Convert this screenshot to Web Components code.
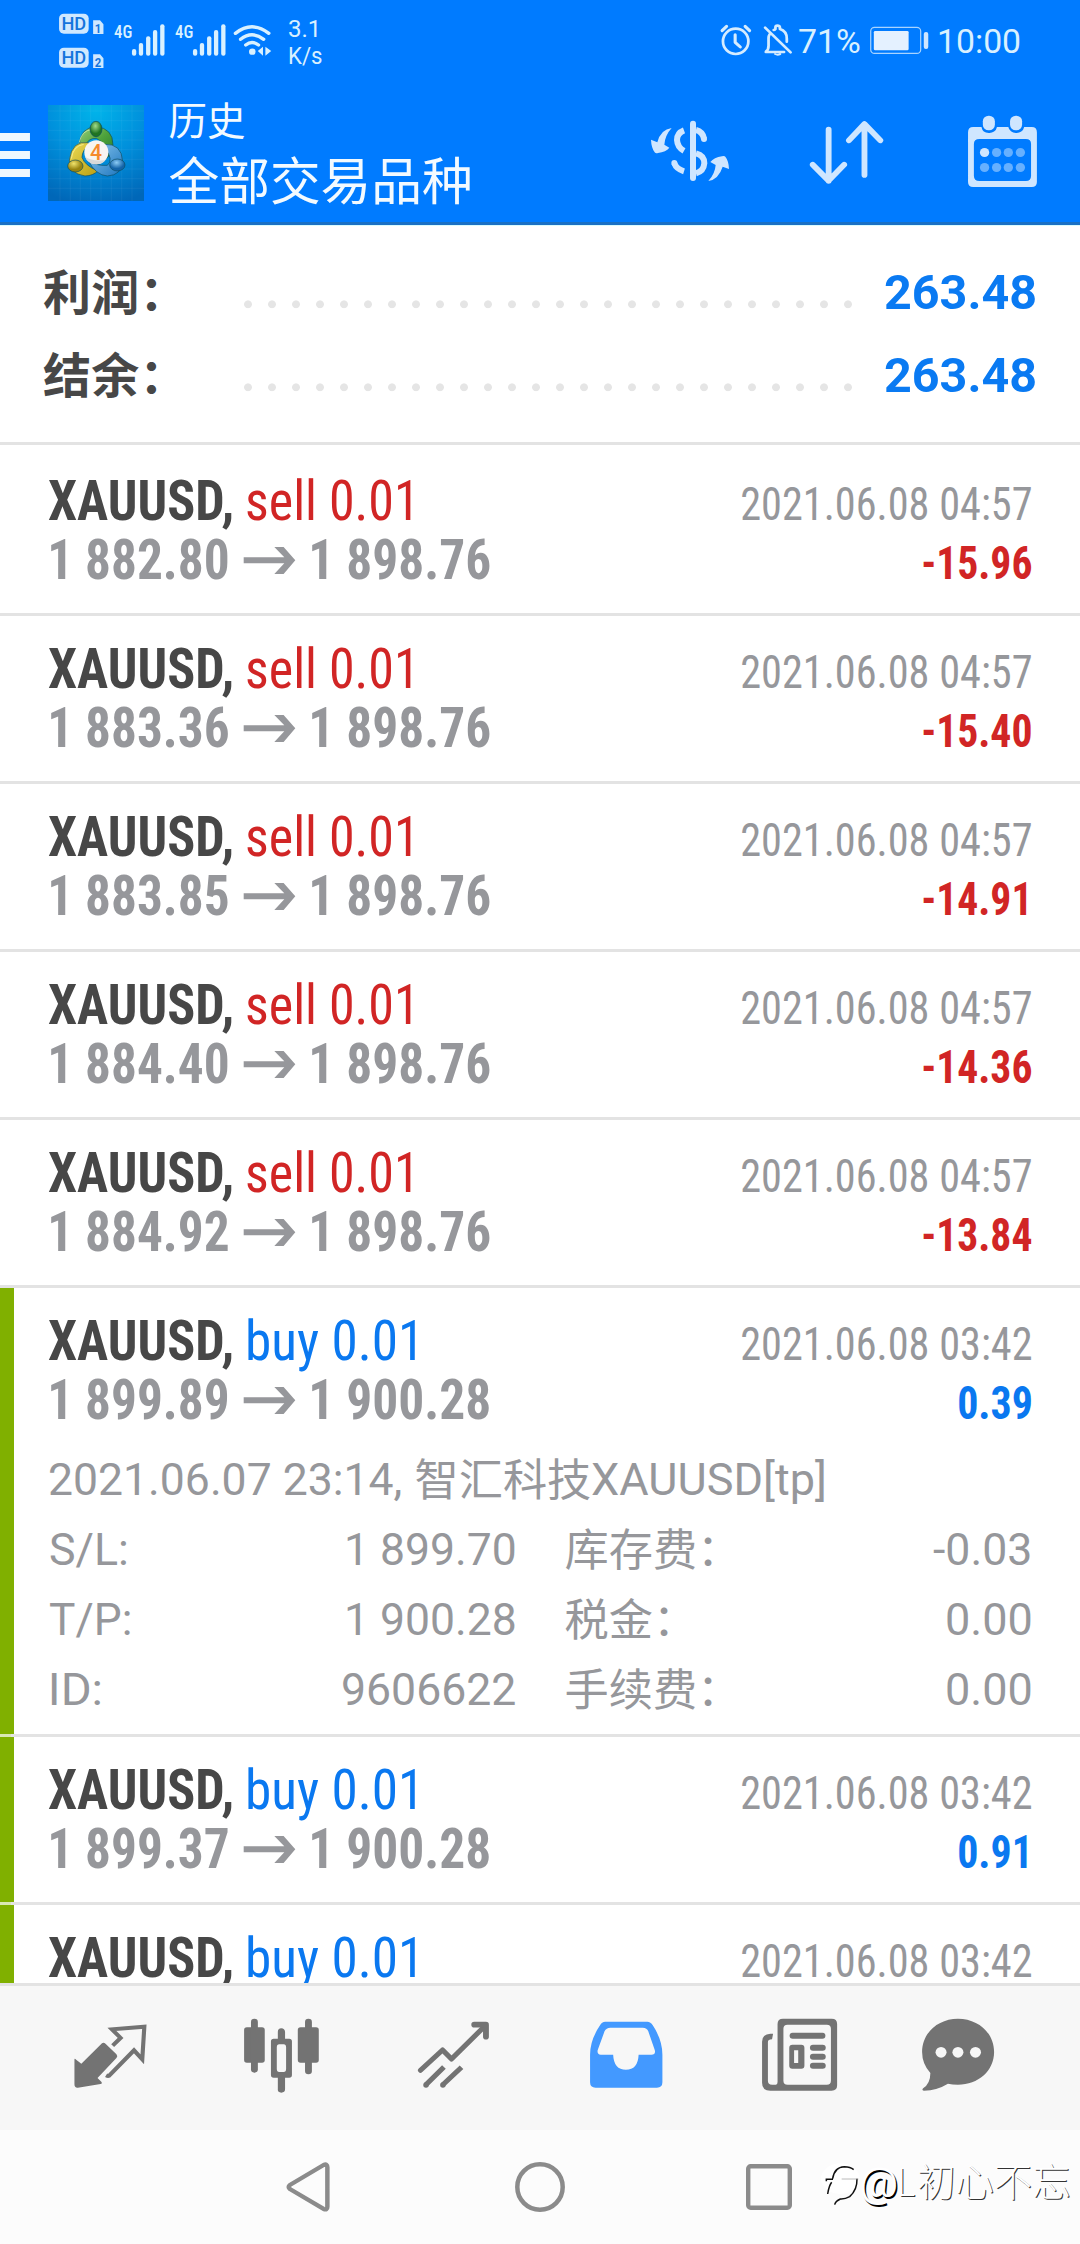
<!DOCTYPE html>
<html lang="zh-CN">
<head>
<meta charset="utf-8">
<title>历史</title>
<style>
html,body{margin:0;padding:0}
body{width:1080px;height:2244px;overflow:hidden;background:#fff;font-family:Roboto,'Noto Sans CJK SC',sans-serif}
</style>
</head>
<body>
<history-app></history-app>
<script>
const define=(name,html,after)=>{
  const t=document.createElement('template');t.innerHTML=html;
  customElements.define(name,class extends HTMLElement{
    connectedCallback(){
      if(this.shadowRoot)return;
      this.attachShadow({mode:'open'}).append(t.content.cloneNode(true));
      after&&after(this,this.shadowRoot);
    }
  });
};

/* Text fitted to a given ink width. "like" names a sample string that defines the scale. */
const ctx=document.createElement('canvas').getContext('2d');
define('fit-text',`<style>:host{display:inline-block;white-space:nowrap}span{display:inline-block;transform-origin:0 50%}</style><span></span>`,(h,r)=>{
  const s=r.querySelector('span'),text=h.getAttribute('text');s.textContent=text;
  const c=getComputedStyle(h);ctx.font=`${c.fontWeight} ${c.fontSize} ${c.fontFamily}`;
  const m=ctx.measureText(h.getAttribute('like')||text);
  const l=-m.actualBoundingBoxLeft,ink=m.actualBoundingBoxRight-l,k=+h.getAttribute('w')/ink;
  const adv=ctx.measureText(text).width,rb=m.width-m.actualBoundingBoxRight;
  h.style.width=(adv-l-rb)*k+'px';
  s.style.transform=`translateX(${-l*k}px) scaleX(${k})`;
});

/* Icons: [viewBox, width, height, markup] */
const bars='<g fill="#d9f1ff">'+[[383,147,20],[403,129,38],[424,109,58],[444,90,77],[465,73,94]].map(([x,y,h])=>`<rect x="${x}" y="${y}" width="12.5" height="${h}" rx="6"/>`).join('')+'</g>';
const ICONS={
 hd:['165 0 145 240',49.9,80,`<g fill="#cfe8ff"><rect x="171" y="41" width="86" height="60" rx="14"/><rect x="171" y="143" width="86" height="60" rx="14"/><path d="M270 61H290L300 73V102H270ZM270 163H290L300 175V204H270Z"/></g><g fill="#1474dd" font-family="Roboto" font-weight="500" font-size="54"><text x="178" y="91" textLength="72" lengthAdjust="spacingAndGlyphs">HD</text><text x="178" y="193" textLength="72" lengthAdjust="spacingAndGlyphs">HD</text><g font-size="38" font-weight="700"><text x="275" y="98" textLength="19" lengthAdjust="spacingAndGlyphs">1</text><text x="275" y="200" textLength="19" lengthAdjust="spacingAndGlyphs">2</text></g></g>`],
 signal:['328 0 155 240',53.4,80,`<text x="331" y="115" font-family="Roboto Condensed" font-weight="500" font-size="57" fill="#d9f1ff" textLength="53" lengthAdjust="spacingAndGlyphs">4G</text>`+bars],
 wifi:['675 0 120 240',41.3,80,`<g fill="none" stroke="#d9f1ff" stroke-width="10" stroke-linecap="round"><path d="M685 100Q733 61 782 100M700 118Q733 91 767 118M715 135Q733 120 752 135"/></g><circle cx="734" cy="155" r="9.500" fill="#d9f1ff"/><path d="M765 140V167L750 153ZM772 140L789 153L772 167Z" fill="#d9f1ff"/>`],
 alarm:['518 0 98 240',33.7,80,`<g fill="none" stroke="#d5ecff" stroke-width="8" stroke-linecap="round" stroke-linejoin="round"><ellipse cx="566.500" cy="124" rx="37" ry="38"/><path d="M565 104V127L580 141" stroke-width="9"/><path d="M527 92L540 79M594 79L607 92" stroke-width="9"/></g>`],
 bell:['642 0 92 240',31.7,80,`<g fill="none" stroke="#d5ecff" stroke-width="8" stroke-linecap="round" stroke-linejoin="round"><path d="M651 83L725 157M653 156H706M654 154Q661 149 661 137V114Q661 108 664 103M676 90Q679 90 681 87V82Q681 77 687 77T694 82V87Q714 93 714 116V125"/><path d="M680 162Q687 166 695 162" stroke-width="6"/></g>`],
 battery:['955 0 175 240',60.3,80,`<rect x="960" y="82" width="145" height="78" rx="11" fill="none" stroke="#a9d4ff" stroke-width="3.500"/><rect x="969" y="93" width="101" height="58" rx="4" fill="#e4f1ff"/><rect x="1114" y="96" width="13" height="51" rx="6" fill="#cfe6ff"/>`],
 menu:['0 396 90 138',31,46,`<g fill="#eef8ff"><rect y="399" width="87" height="24"/><rect y="453" width="87" height="24"/><rect y="507" width="87" height="24"/></g>`],
 logo:['54 45 288 288',96,96,`<defs><radialGradient id="b" cx=".5" cy=".05" r="1"><stop offset="0" stop-color="#00b4ea"/><stop offset=".5" stop-color="#0090dc"/><stop offset="1" stop-color="#0067b8"/></radialGradient><linearGradient id="g" x2="1" y2="1"><stop offset="0" stop-color="#9bcf7e"/><stop offset=".5" stop-color="#4fa33c"/><stop offset="1" stop-color="#257c28"/></linearGradient><linearGradient id="y" x2="1" y2="1"><stop offset="0" stop-color="#eddc56"/><stop offset="1" stop-color="#b99e12"/></linearGradient><linearGradient id="u" x2="1" y2="1"><stop offset="0" stop-color="#8cc9ef"/><stop offset="1" stop-color="#1b74be"/></linearGradient><radialGradient id="g2" cx=".45" cy=".3"><stop offset="0" stop-color="#a3dc8b"/><stop offset="1" stop-color="#1f7422"/></radialGradient><radialGradient id="y2" cx=".4" cy=".3"><stop offset="0" stop-color="#f0e36c"/><stop offset="1" stop-color="#97830f"/></radialGradient><radialGradient id="u2" cx=".45" cy=".3"><stop offset="0" stop-color="#8ccbf5"/><stop offset="1" stop-color="#1464a8"/></radialGradient></defs>
 <rect x="54" y="45" width="288" height="288" fill="url(#b)"/><path d="M90 45V333M121 45V333M151 45V333M182 45V333M213 45V333M244 45V333M275 45V333M306 45V333M54 63H342M54 92H342M54 121H342M54 150H342M54 179H342M54 208H342M54 237H342M54 266H342M54 295H342" stroke="#fff" stroke-opacity=".1" stroke-width="1.500"/>
 <g stroke-width="3" stroke="#0b4b60" stroke-opacity=".65"><path d="M148 167Q149 112 199 110Q249 115 249 165Q245 195 227 207Q232 160 199 145Q172 145 168 167Z" fill="url(#g)"/><path d="M176 158Q126 150 118 210Q116 250 165 258Q190 257 203 243Q164 226 156 202Q157 180 176 166Z" fill="url(#y)"/><path d="M223 163Q275 160 278 214Q275 256 232 258Q198 256 174 211Q196 228 232 226Q253 210 223 172Z" fill="url(#u)"/><path d="M148 157Q155 121 185 119" fill="none" stroke="#d6f5b8" stroke-opacity=".7"/><path d="M124 206Q129 168 161 163" fill="none" stroke="#fff5a6" stroke-opacity=".7"/><ellipse cx="198" cy="117" rx="18" ry="23" fill="url(#g2)"/><ellipse cx="136" cy="228" rx="23" ry="18" fill="url(#y2)"/><ellipse cx="262" cy="225" rx="23" ry="18" fill="url(#u2)"/></g>
 <circle cx="199" cy="187" r="36" fill="#f7f5f2"/><path d="M164 198Q177 214 226 211Q217 223 199 223Q172 222 164 198Z" fill="#d9d9d9"/><text x="180" y="209" font-family="Roboto" font-weight="500" font-size="64" fill="#f58a2c" textLength="36" lengthAdjust="spacingAndGlyphs">4</text>`],
 dollar:['30 45 240 190',80,63.3,`<g fill="none" stroke="#cfe6ff" stroke-linecap="butt"><path d="M159 56V219" stroke-width="18" stroke-linecap="round"/><path d="M132 76Q111 84 111 105Q112 127 132 138M103 175Q109 192 132 199" stroke-width="18"/><path d="M168 75Q188 80 192 101" stroke-width="18"/><path d="M168 145Q193 151 193 175Q191 199 168 205" stroke-width="18"/></g><circle cx="103" cy="174" r="9" fill="#cfe6ff"/><circle cx="192" cy="102" r="9" fill="#cfe6ff"/><path d="M95 69Q62 73 52 112L33 104Q34 128 44 142Q47 146 54 144Q78 141 88 128L73 119Q75 91 95 69ZM205 228Q236 223 248 185L267 192Q266 167 256 155Q253 152 246 154Q222 158 211 171L227 180Q225 207 205 228Z" fill="#cfe6ff"/>`],
 arrows:['780 360 220 195',75.8,65,`<g fill="none" stroke="#cfe6ff" stroke-width="17" stroke-linecap="round" stroke-linejoin="round"><path d="M837 389V542M791 494L837 542L882 494M941 525V373M896 421L941 372L987 421"/></g>`],
 calendar:['1240 345 205 218',70.6,72.7,`<path fill-rule="evenodd" d="M1258 381H1282A22 22 0 0 0 1303 399A22 22 0 0 0 1327 381H1360A22 22 0 0 0 1382 399A22 22 0 0 0 1406 381H1428Q1443 381 1443 397V546Q1443 561 1428 561H1258Q1243 561 1243 546V397Q1243 381 1258 381ZM1276 417Q1260 417 1260 432V527Q1260 543 1276 543H1411Q1426 543 1426 527V432Q1426 417 1411 417Z" fill="#cfe6ff"/><rect x="1286" y="347" width="35" height="44" rx="17" fill="#cfe6ff"/><rect x="1365" y="347" width="35" height="44" rx="17" fill="#cfe6ff"/><circle cx="1291" cy="457.500" r="13.500" fill="#cfe6ff"/><g fill="#66b0ff"><circle cx="1326" cy="457.500" r="13.500"/><circle cx="1360" cy="457.500" r="13.500"/><circle cx="1395" cy="457.500" r="13.500"/><circle cx="1291" cy="502.500" r="13.500"/><circle cx="1326" cy="502.500" r="13.500"/><circle cx="1360" cy="502.500" r="13.500"/><circle cx="1395" cy="502.500" r="13.500"/></g>`],
 to:['708 960 154 87',53,29,`<path fill="#96979b" d="M799 963H826L860 1003L826 1044H799L828 1012H710V994H828Z"/>`],
 trade:['205 400 230 250',79.2,83.3,`<path fill="#737373" d="M215 540Q215 534 220 540L235 552L295 491Q300 487 306 493L337 524Q342 530 337 535L282 595L293 606Q297 611 291 613L225 624Q215 625 215 614Z"/><path fill="none" stroke="#737373" stroke-width="12" stroke-linejoin="miter" d="M326 498L349 475L324 449L418 441L412 539L388 512L316 588Q312 590 307 587"/>`],
 candles:['700 400 235 250',80.9,83.3,`<g fill="#737373"><rect x="709" y="443" width="60" height="106" rx="8"/><rect x="729" y="417" width="20" height="162" rx="10"/><rect x="865" y="443" width="61" height="106" rx="8"/><rect x="886" y="417" width="20" height="167" rx="10"/><path fill-rule="evenodd" d="M807 477V457Q807 446 817 446T828 457V477H840Q848 477 848 485V586Q848 594 840 594H828V629Q828 639 817 639T807 629V594H795Q787 594 787 586V485Q787 477 795 477ZM811 494Q804 494 804 503V568Q804 577 811 577H824Q831 577 831 568V503Q831 494 824 494Z"/></g>`],
 trend:['1205 400 225 250',77.5,83.3,`<g fill="none" stroke="#737373" stroke-width="15" stroke-linejoin="round"><path stroke-linecap="round" d="M1221 572L1285 511L1311 538L1408 439"/><path stroke-linecap="round" stroke-width="17" d="M1377 435H1411V471"/><path d="M1236 616L1289 562M1285 616L1340 563"/></g><circle cx="1237" cy="616" r="8" fill="#737373"/><circle cx="1286" cy="616" r="8" fill="#737373"/>`],
 inbox:['140 400 225 250',77.5,83.3,`<path fill="#4399ff" fill-rule="evenodd" d="M190 426H312Q322 426 328 437Q356 481 356 525V608Q356 624 340 624H162Q146 624 146 608V525Q146 481 175 437Q180 426 190 426ZM205 444Q193 444 188 455L168 512Q166 525 177 525H213Q215 570 250 570T287 525H324Q337 525 334 512L315 455Q311 444 299 444Z"/>`],
 news:['640 400 230 250',79.2,83.3,`<path fill="#737373" fill-rule="evenodd" d="M707 417H848Q864 417 864 433V617Q864 633 848 633H670Q646 633 646 609V486Q646 464 670 462H678L675 479Q663 480 663 487V604Q663 615 675 615H686Q691 615 691 607V433Q691 417 707 417ZM720 435Q708 435 708 447V603Q708 615 720 615H834Q846 615 846 603V447Q846 435 834 435Z"/><g fill="#737373"><rect x="726" y="459" width="104" height="18" rx="9"/><rect x="785" y="495" width="46" height="18" rx="9"/><rect x="785" y="522" width="46" height="18" rx="9"/><rect x="785" y="549" width="46" height="18" rx="9"/><path fill-rule="evenodd" d="M734 495H760Q769 495 769 504V558Q769 567 760 567H734Q725 567 725 558V504Q725 495 734 495ZM739 512V550H751V512Z"/></g>`],
 chat:['1100 400 225 250',77.5,83.3,`<path fill="#737373" d="M1213 417C1272 417 1318 460 1318 517C1318 574 1272 615 1213 615Q1197 615 1184 612Q1153 632 1114 633Q1107 632 1112 626Q1133 612 1133 580Q1109 553 1109 517C1109 460 1155 417 1213 417Z"/><g fill="#f7f7f7"><circle cx="1164" cy="518" r="16"/><circle cx="1213" cy="518" r="16"/><circle cx="1264" cy="518" r="16"/></g>`],
 back:['825 840 140 160',48.2,53.3,`<path fill="none" stroke="#8b8b8b" stroke-width="13" stroke-linejoin="round" d="M842 915L940 855Q951 850 951 862V980Q951 992 940 987L842 927Q836 921 842 915Z"/>`],
 home:['0 0 50 50',50,50,`<circle cx="25" cy="25" r="22.700" fill="none" stroke="#8b8b8b" stroke-width="4.500"/>`],
 recent:['0 0 46 46',46,46,`<rect x="2.200" y="2.200" width="41.600" height="41.600" rx="2.500" fill="none" stroke="#8b8b8b" stroke-width="4.400"/>`],
 mark:['15 30 120 150',40,50,`<ellipse cx="76" cy="92" rx="58" ry="46" fill="#fff"/><path d="M53 92Q58 57 88 56Q106 56 116 65M34 100V94H54M50 103Q42 113 38 138" fill="none" stroke="#111" stroke-width="4.500"/><path d="M126 92Q127 125 104 146Q90 154 76 153Q61 160 59 170" fill="none" stroke="#111" stroke-width="4.500"/><path d="M80 93H130" stroke="#999" stroke-width="2"/>`]
};
define('app-icon',`<style>:host{display:block;flex:none}svg{display:block}</style>`,(h,r)=>{
  const [vb,w,hh,m]=ICONS[h.getAttribute('name')];
  const d=document.createElement('div');
  d.innerHTML=`<svg width="${w}" height="${hh}" viewBox="${vb}" preserveAspectRatio="none">${m}</svg>`;
  r.append(d);
});

define('status-bar',`<style>
:host{display:flex;height:84px;color:#d9f0ff;line-height:80px;font-size:34px}
.net{margin-left:15.8px;font-size:23.500px;line-height:27px;padding-top:15.500px;display:flex;flex-direction:column}
.right{margin-left:auto;display:flex;padding-right:60px}
</style>
<app-icon name="hd" style="margin-left:56.800px"></app-icon>
<app-icon name="signal" style="margin-left:6.300px"></app-icon>
<app-icon name="signal" style="margin-left:7.600px"></app-icon>
<app-icon name="wifi" style="margin-left:5px"></app-icon>
<div class="net"><fit-text text="3.1" w="28"></fit-text><fit-text text="K/s" w="32.500"></fit-text></div>
<div class="right"><app-icon name="alarm"></app-icon><app-icon name="bell" style="margin-left:9px"></app-icon>
<fit-text text="71%" w="61" style="margin-left:6px;padding-top:.5px"></fit-text><app-icon name="battery" style="margin-left:9px"></app-icon>
<fit-text text="10:00" w="81" style="margin-left:9.500px;padding-top:.5px"></fit-text></div>`);

define('app-header',`<style>
:host{display:block;height:222px;background:#007bff;border-bottom:3px solid #1a70c4}
.bar{display:flex;align-items:flex-start}
.t{margin-left:24.500px;color:#f3faff;display:flex;flex-direction:column;padding-top:10px;width:481.500px}
.s{font-size:38.500px;line-height:56px}.b{font-size:50.700px;line-height:65px}
</style>
<status-bar></status-bar>
<div class="bar"><app-icon name="menu" style="margin-top:48px"></app-icon><app-icon name="logo" style="margin:21px 0 0 17px"></app-icon>
<div class="t"><span class="s">历史</span><span class="b">全部交易品种</span></div>
<app-icon name="dollar" style="margin-top:36px"></app-icon><app-icon name="arrows" style="margin:36px 0 0 78.600px"></app-icon><app-icon name="calendar" style="margin:31px 0 0 82.600px"></app-icon></div>`);

define('summary-row',`<style>
:host{display:flex;height:83px;line-height:83px;font-size:48px;font-weight:700}
.l{width:193.300px;padding-left:1px;color:#474747;line-height:85px;letter-spacing:.3px}
.d{width:624px;background:radial-gradient(circle at 12px 53.300px,#e5e5e5 3.500px,transparent 4.300px) 0 0/24px 83px}
fit-text{margin-left:25.200px;color:#0a7af2}
</style><span class="l"><slot></slot></span><span class="d"></span><fit-text text="263.48" w="150.500"></fit-text>`);

define('account-summary',`<style>:host{display:block;box-sizing:border-box;height:220px;padding:25px 0 0 42px;border-top:1px solid #d9fbff;border-bottom:3px solid #e3e3e3}</style>
<summary-row>利润：</summary-row><summary-row>结余：</summary-row>`);

define('deal-row',`<style>
:host{display:block;position:relative;box-sizing:border-box;padding:24px 0 23px;border-bottom:3px solid #e3e3e3;font-size:55px;line-height:59px;color:#96979b}
:host([first]){padding-top:27px}
:host([tp]){border-image:linear-gradient(90deg,#d9e8b4 14px,#e3e3e3 14px) 3}
:host([tp])::before{content:"";position:absolute;left:0;top:0;bottom:0;width:14px;background:#80b000}
:host([open]){padding-bottom:9px}
.r{display:flex;align-items:baseline;height:59px;font-family:'Roboto Condensed',sans-serif;padding:0 49.500px 0 47.500px}
.sym{font-weight:700;color:#474747}
.side{margin-left:15px;color:#d12525}.side.buy{color:#0a78f0;margin-left:16px}
.date{font-size:46px;margin-left:auto}
.p{font-weight:700}
.val{font-size:45.500px;font-weight:700;margin-left:auto;color:#d12525}.val.pos{color:#0a78f0}
</style><div class="r"></div><div class="r" style="padding-left:50.500px;padding-right:49px"></div><slot></slot>`,(h,r)=>{
  const a=n=>h.getAttribute(n),buy=a('side')==='buy',[x,y]=r.querySelectorAll('.r'),pos=a('profit')[0]!=='-';
  x.innerHTML=`<fit-text class="sym" text="XAUUSD," w="184"></fit-text><fit-text class="side ${a('side')}" text="${a('side')} 0.01" w="${buy?167.5:164}"></fit-text><fit-text class="date" text="${a('date')}" like="2021.06.08 03:42" w="289"></fit-text>`;
  y.innerHTML=`<fit-text class="p" text="${a('from')}" like="1 882.80" w="177"></fit-text><app-icon name="to" style="margin:15px 16px 0 15.500px;align-self:flex-start"></app-icon><fit-text class="p" text="${a('to')}" like="1 898.76" w="177.500"></fit-text><fit-text class="val ${pos?'pos':''}" text="${a('profit')}" ${pos?'like="0.39" w="72"':'like="-15.96" w="108.500"'}></fit-text>`;
});

define('deal-details',`<style>
:host{display:block;margin-top:15px;padding:0 49px;font-size:45px;line-height:70px;color:#96979b;font-family:Roboto,'Noto Sans CJK SC',sans-serif}
.c{height:70px;display:flex;white-space:nowrap}
.g{display:grid;grid-template-columns:465.500px 465.500px;column-gap:50px}
.g>div{display:flex;justify-content:space-between;height:70px}
.k{font-size:44.200px;line-height:72px}
</style>
<div class="c"><fit-text text="2021.06.07 23:14," w="350.500" style="margin-left:1px"></fit-text><span class="k" style="margin-left:14px">智汇科技</span><fit-text text="XAUUSD[tp]" w="232" style="margin-left:.5px"></fit-text></div>
<div class="g">
<div><fit-text text="S/L:" w="76" style="margin-left:.5px"></fit-text><fit-text text="1 899.70" w="167.500"></fit-text></div><div><span class="k">库存费：</span><fit-text text="-0.03" w="97"></fit-text></div>
<div><fit-text text="T/P:" w="79.500" style="margin-left:.5px"></fit-text><fit-text text="1 900.28" w="167.500"></fit-text></div><div><span class="k">税金：</span><fit-text text="0.00" w="83.500"></fit-text></div>
<div><fit-text text="ID:" w="48" style="margin-left:2.500px"></fit-text><fit-text text="9606622" w="172"></fit-text></div><div><span class="k">手续费：</span><fit-text text="0.00" w="83.500"></fit-text></div>
</div>`);

define('deal-list',`<style>:host{display:block;height:1538px;overflow:hidden}</style>
<deal-row first side="sell" date="2021.06.08 04:57" from="1 882.80" to="1 898.76" profit="-15.96"></deal-row>
<deal-row side="sell" date="2021.06.08 04:57" from="1 883.36" to="1 898.76" profit="-15.40"></deal-row>
<deal-row side="sell" date="2021.06.08 04:57" from="1 883.85" to="1 898.76" profit="-14.91"></deal-row>
<deal-row side="sell" date="2021.06.08 04:57" from="1 884.40" to="1 898.76" profit="-14.36"></deal-row>
<deal-row side="sell" date="2021.06.08 04:57" from="1 884.92" to="1 898.76" profit="-13.84"></deal-row>
<deal-row tp open side="buy" date="2021.06.08 03:42" from="1 899.89" to="1 900.28" profit="0.39"><deal-details></deal-details></deal-row>
<deal-row tp side="buy" date="2021.06.08 03:42" from="1 899.37" to="1 900.28" profit="0.91"></deal-row>
<deal-row tp side="buy" date="2021.06.08 03:42" from="" to="" profit=""></deal-row>`);

define('tab-bar',`<style>:host{display:flex;box-sizing:border-box;height:147px;background:#f7f7f7;border-top:3px solid #e3e3e3;padding:27.300px 0 0 70.600px}</style>
<app-icon name="trade"></app-icon><app-icon name="candles" style="margin-left:91.200px"></app-icon><app-icon name="trend" style="margin-left:93px"></app-icon><app-icon name="inbox" style="margin-left:95.800px"></app-icon><app-icon name="news" style="margin-left:94.700px"></app-icon><app-icon name="chat" style="margin-left:79.200px"></app-icon>`);

define('system-nav',`<style>
:host{display:flex;position:relative;box-sizing:border-box;height:114px;background:#fcfcfc;align-items:center;padding-left:284.100px}
.w{position:absolute;left:820px;top:28px;display:flex;align-items:flex-start;font:300 38.400px/50px Roboto,'Noto Sans CJK SC',sans-serif;color:#fff;text-shadow:1px 1px 0 #333;white-space:nowrap}
.at{font-weight:400;font-size:41px;text-shadow:1.500px 1.500px 0 #000;margin-left:1px}
</style>
<app-icon name="back"></app-icon><app-icon name="home" style="margin-left:182.500px"></app-icon><app-icon name="recent" style="margin-left:181.200px"></app-icon>
<div class="w"><app-icon name="mark"></app-icon><fit-text class="at" text="@" w="35"></fit-text><fit-text text="L" w="15" style="margin-left:4px"></fit-text><span style="margin-left:2px">初心不忘</span></div>`);

define('history-app',`<style>:host{display:flex;flex-direction:column;width:1080px;height:2244px;background:#fff}:host>*{flex:none}</style>
<app-header></app-header><account-summary></account-summary><deal-list></deal-list><tab-bar></tab-bar><system-nav></system-nav>`);
</script>
</body>
</html>
